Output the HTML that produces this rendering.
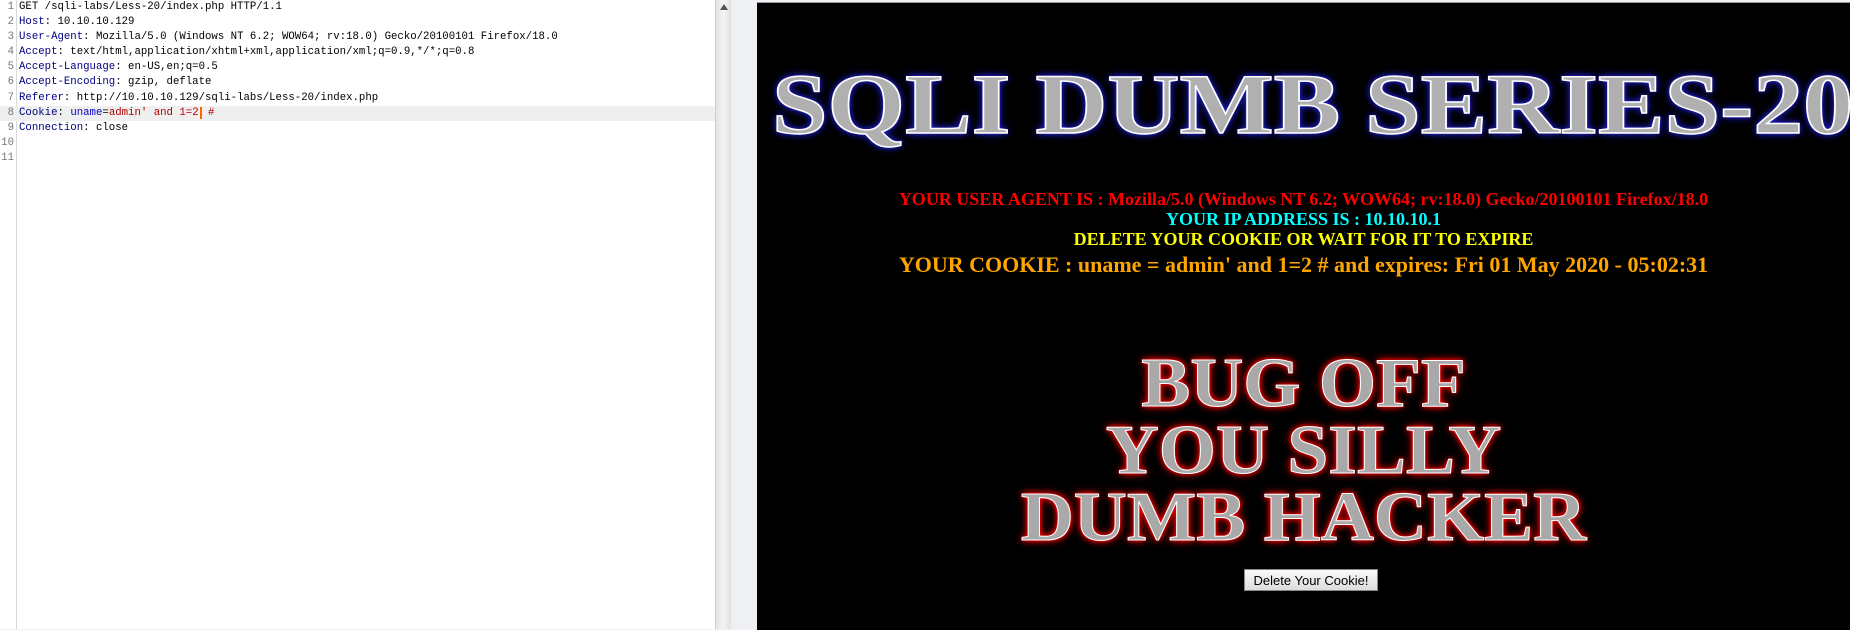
<!DOCTYPE html>
<html><head><meta charset="utf-8"><style>
body{margin:0;width:1850px;height:629px;overflow:hidden;background:#eef0f3;position:relative;font-family:"Liberation Serif",serif}
#ed{position:absolute;left:0;top:0;width:715px;height:629px;background:#fff}
#gut{position:absolute;left:16px;top:0;width:1px;height:629px;background:#d8d8d8}
.ln{position:absolute;left:0;width:715px;height:15px;font:10.7px/15px "Liberation Mono",monospace;white-space:pre;color:#000}
.ln .n{display:inline-block;width:13px;text-align:right;color:#777;margin-right:5px;padding-left:1px}
.k{color:#000080}.r{color:#b00000}.b{color:#0000c0}
#sb{position:absolute;left:715px;top:0;width:15px;height:629px;background:linear-gradient(90deg,#e4e4e4,#f4f4f4 50%,#e0e0e0);border-left:1px solid #cfcfcf}
#blk{position:absolute;left:757px;top:2px;width:1093px;height:627px;background:#000;border-top:1px solid #999;overflow:hidden}
.big{position:absolute;white-space:nowrap;font-weight:bold;color:#a9a9a9}
.t{position:absolute;left:0;width:1093px;text-align:center;font-weight:bold;white-space:nowrap}
button{position:absolute;left:487px;top:566px;width:134px;height:22px;font:13px "Liberation Sans",sans-serif;background:linear-gradient(#fafafa,#ddd);border:1px solid #888;padding:0}
</style></head><body>
<div id="ed">
<div id="gut"></div>
<div style="position:absolute;left:0;top:106px;width:715px;height:15px;background:#efefef"></div>
<div class="ln" style="top:0"><span class="n">1</span>GET /sqli-labs/Less-20/index.php HTTP/1.1</div>
<div class="ln" style="top:15px"><span class="n">2</span><span class="k">Host</span>: 10.10.10.129</div>
<div class="ln" style="top:30px"><span class="n">3</span><span class="k">User-Agent</span>: Mozilla/5.0 (Windows NT 6.2; WOW64; rv:18.0) Gecko/20100101 Firefox/18.0</div>
<div class="ln" style="top:45px"><span class="n">4</span><span class="k">Accept</span>: text/html,application/xhtml+xml,application/xml;q=0.9,*/*;q=0.8</div>
<div class="ln" style="top:60px"><span class="n">5</span><span class="k">Accept-Language</span>: en-US,en;q=0.5</div>
<div class="ln" style="top:75px"><span class="n">6</span><span class="k">Accept-Encoding</span>: gzip, deflate</div>
<div class="ln" style="top:91px"><span class="n">7</span><span class="k">Referer</span>: http://10.10.10.129/sqli-labs/Less-20/index.php</div>
<div class="ln" style="top:106px"><span class="n">8</span><span class="k">Cookie</span>: <span class="b">uname</span>=<span class="r">admin' and 1=2</span><span style="border-left:2px solid #f60;margin-left:1px"></span> <span class="r">#</span></div>
<div class="ln" style="top:121px"><span class="n">9</span><span class="k">Connection</span>: close</div>
<div class="ln" style="top:136px"><span class="n">10</span></div>
<div class="ln" style="top:151px"><span class="n">11</span></div>
</div>
<div id="sb"><div style="position:absolute;left:4px;top:4px;width:0;height:0;border-left:4px solid transparent;border-right:4px solid transparent;border-bottom:6px solid #555"></div></div>
<div id="blk">
<div class="big" style="left:15px;top:58px;font-size:86px;line-height:86px;transform:scaleX(1.16);transform-origin:0 0;color:#b0b0b0;-webkit-text-stroke:1.5px #fff;text-shadow:0 0 3px #2020d0,0 0 6px #2020d0,0 0 9px #1a1ab0">SQLI DUMB SERIES-20</div>
<div class="t" style="top:186px;font-size:18px;line-height:20px;color:#f00">YOUR USER AGENT IS : Mozilla/5.0 (Windows NT 6.2; WOW64; rv:18.0) Gecko/20100101 Firefox/18.0</div>
<div class="t" style="top:206px;font-size:18px;line-height:20px;color:#0ff">YOUR IP ADDRESS IS : 10.10.10.1</div>
<div class="t" style="top:226px;font-size:18px;line-height:20px;color:#ff0">DELETE YOUR COOKIE OR WAIT FOR IT TO EXPIRE</div>
<div class="t" style="top:248px;font-size:22px;line-height:27px;color:#ffa500">YOUR COOKIE : uname = admin' and 1=2 # and expires: Fri 01 May 2020 - 05:02:31</div>
<div class="t big" style="top:347px;font-size:70px;line-height:67px;transform:scaleX(1.05);color:#a9a9a9;-webkit-text-stroke:1px #fff;text-shadow:0 0 3px #f00,0 0 6px #f00,0 0 9px #d00">BUG OFF<br>YOU SILLY<br>DUMB HACKER</div>
<button>Delete Your Cookie!</button>
</div>
</body></html>
